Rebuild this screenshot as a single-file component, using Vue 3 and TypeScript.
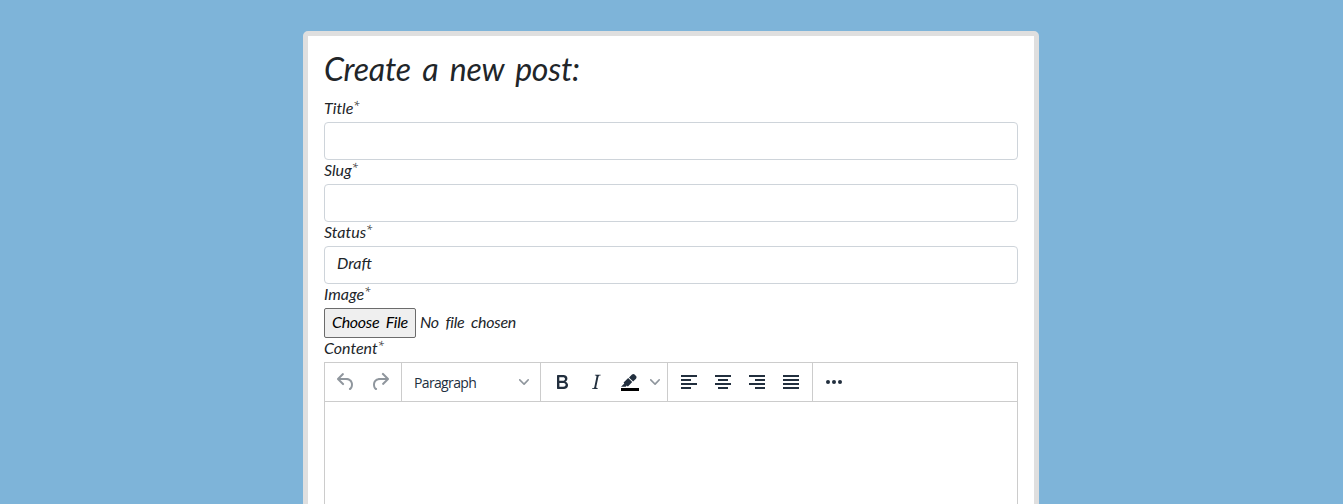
<script setup lang="ts">
import { ref } from 'vue'

const title = ref('')
const slug = ref('')

const alignments: { name: string; d: string }[] = [
  { name: 'Align left', d: 'M4 5h16v2H4zM4 9h10v2H4zM4 13h16v2H4zM4 17h10v2H4z' },
  { name: 'Align center', d: 'M4 5h16v2H4zM7 9h10v2H7zM4 13h16v2H4zM7 17h10v2H7z' },
  { name: 'Align right', d: 'M4 5h16v2H4zM10 9h10v2H10zM4 13h16v2H4zM10 17h10v2H10z' },
  { name: 'Justify', d: 'M4 5h16v2H4zM4 9h16v2H4zM4 13h16v2H4zM4 17h16v2H4z' },
]
const chevron =
  'M8.7 2.2c.3-.3.8-.3 1 0 .4.4.4.9 0 1.2L5.7 7.8c-.3.3-.9.3-1.2 0L.2 3.4a.8.8 0 010-1.2c.3-.3.8-.3 1.1 0L5 6l3.7-3.8z'
</script>

<template>
  <main class="page">
    <form class="card" @submit.prevent>
      <h2 class="heading">Create a new post:</h2>

      <label class="label" for="title">Title<sup>*</sup></label>
      <input id="title" v-model="title" class="control" type="text" />

      <label class="label" for="slug">Slug<sup>*</sup></label>
      <input id="slug" v-model="slug" class="control" type="text" />

      <label class="label">Status<sup>*</sup></label>
      <div class="control">Draft</div>

      <label class="label">Image<sup>*</sup></label>
      <div class="file">
        <button type="button" class="file-button">Choose File</button>
        <span class="file-name">No file chosen</span>
      </div>

      <label class="label">Content<sup>*</sup></label>
      <div class="editor">
        <div class="toolbar">
          <div class="group">
            <button type="button" class="tool" disabled aria-label="Undo">
              <svg width="24" height="24"><path d="M6.4 8H12c3.7 0 6.2 2 6.8 5.1.6 2.7-.4 5.6-2.3 6.8a1 1 0 01-1-1.8c1.1-.6 1.8-2.7 1.4-4.6-.5-2.1-2.1-3.5-4.9-3.5H6.4l3.3 3.3a1 1 0 11-1.4 1.4l-5-5a1 1 0 010-1.4l5-5a1 1 0 011.4 1.4L6.4 8z" /></svg>
            </button>
            <button type="button" class="tool" disabled aria-label="Redo">
              <svg width="24" height="24"><path d="M17.6 10H12c-2.8 0-4.4 1.4-4.9 3.5-.4 2 .3 4 1.4 4.6a1 1 0 11-1 1.8c-2-1.2-2.9-4.1-2.3-6.8.6-3 3-5.1 6.8-5.1h5.6l-3.3-3.3a1 1 0 111.4-1.4l5 5a1 1 0 010 1.4l-5 5a1 1 0 01-1.4-1.4l3.3-3.3z" /></svg>
            </button>
          </div>
          <div class="group">
            <button type="button" class="select">
              <span>Paragraph</span>
              <svg class="chevron" width="10" height="10"><path :d="chevron" /></svg>
            </button>
          </div>
          <div class="group">
            <button type="button" class="tool" aria-label="Bold">
              <svg width="24" height="24"><path fill-rule="evenodd" d="M7.8 19c-.3 0-.5 0-.6-.2l-.2-.5V5.7c0-.2 0-.4.2-.5l.6-.2h5c1.5 0 2.7.3 3.5 1 .7.6 1.1 1.4 1.1 2.5a3 3 0 01-.6 1.9c-.4.6-1 1-1.6 1.2.4.1.9.3 1.3.6s.8.7 1 1.2c.4.4.5 1 .5 1.6 0 1.3-.4 2.3-1.3 3-.8.7-2.1 1-3.8 1H7.8zm5-8.3c.6 0 1.2-.1 1.6-.5.4-.3.6-.7.6-1.3 0-1.1-.8-1.7-2.3-1.7H9.3v3.5h3.4zm.5 6c.7 0 1.3-.1 1.7-.4.4-.4.6-.9.6-1.5s-.2-1-.7-1.4c-.4-.3-1-.4-2-.4H9.4v3.8h4z" /></svg>
            </button>
            <button type="button" class="tool" aria-label="Italic">
              <svg width="24" height="24"><path fill-rule="evenodd" d="M16.7 4.7l-.1.9h-.3c-.6 0-1 0-1.4.3-.3.3-.4.6-.5 1.1l-2.1 9.8v.6c0 .5.4.8 1.4.8h.2l-.2.8H8l.2-.8h.2c1.1 0 1.8-.5 2-1.5l2-9.8.1-.5c0-.6-.4-.8-1.4-.8h-.3l.2-.9h5.8z" /></svg>
            </button>
            <button type="button" class="tool" aria-label="Background color">
              <svg width="24" height="24">
                <path class="ink" d="M3 18h18v3H3z" />
                <path fill-rule="evenodd" d="M7.7 16.7H3l3.3-3.3-.7-.8L10.2 8l4 4.1-4 4.2c-.2.2-.6.2-.8 0l-.6-.7-1.1 1.1zm5-7.5L11 7.4l3-2.9a2 2 0 012.6 0L18 6c.7.7.7 2 0 2.7l-2.9 2.9-1.8-1.8-.5-.6" />
              </svg>
            </button>
            <button type="button" class="split" aria-label="Background color menu">
              <svg class="chevron" width="10" height="10"><path :d="chevron" /></svg>
            </button>
          </div>
          <div class="group">
            <button v-for="a in alignments" :key="a.name" type="button" class="tool" :aria-label="a.name">
              <svg width="24" height="24"><path :d="a.d" /></svg>
            </button>
          </div>
          <div class="group">
            <button type="button" class="tool" aria-label="More">
              <svg width="24" height="24"><circle cx="6" cy="12" r="2" /><circle cx="12" cy="12" r="2" /><circle cx="18" cy="12" r="2" /></svg>
            </button>
          </div>
        </div>
        <div class="body"></div>
      </div>
    </form>
  </main>
</template>

<style>
body {
  margin: 0;
  background: #7eb4d9;
}
</style>

<style scoped>
* {
  box-sizing: border-box;
}
.page {
  height: 504px;
  padding-top: 31px;
  overflow: hidden;
  background: #7eb4d9;
  color: #212529;
  font: italic 400 16px/24px Lato, sans-serif;
}
.card {
  width: 736px;
  height: 620px;
  margin-left: 303px;
  padding: 16px;
  border: 5px solid #dfdfdf;
  border-radius: 5px;
  background: #fff;
}
.heading {
  height: 38px;
  margin: 0 0 8px;
  font-size: 32px;
  font-weight: 400;
  line-height: 34px;
  white-space: nowrap;
  letter-spacing: -0.2px;
  word-spacing: 4px;
}
.label {
  display: flex;
  height: 24px;
  line-height: 20px;
}
.label sup {
  font: italic 400 11px/14px "Open Sans", sans-serif;
  color: #444;
}
.control {
  display: block;
  width: 100%;
  height: 38px;
  padding: 5px 12px;
  border: 1px solid #ced4da;
  border-radius: 4px;
  background: #fff;
  outline: none;
}
div.control {
  padding-top: 4px;
}
.file {
  display: flex;
  align-items: center;
  gap: 4px;
  height: 30px;
  white-space: nowrap;
}
.file-name {
  height: 26px;
  line-height: 23px;
  word-spacing: 3px;
  letter-spacing: -0.25px;
}
.file-button {
  width: 92px;
  height: 30px;
  padding: 0 0 2px 7px;
  border: 1px solid #6b6b6b;
  border-radius: 2px;
  background: #efefef;
  color: #000;
  font: inherit;
  letter-spacing: -0.3px;
  word-spacing: 3px;
  text-align: left;
  white-space: nowrap;
}
.editor {
  height: 240px;
  border: 1px solid #ccc;
}
.toolbar {
  display: flex;
  height: 39px;
  border-bottom: 1px solid #ccc;
}
.group {
  display: flex;
  align-items: center;
  padding: 0 4px;
  border-right: 1px solid #ccc;
}
.group:last-child {
  border-right: 0;
}
.tool,
.select,
.split {
  display: flex;
  align-items: center;
  justify-content: center;
  width: 34px;
  height: 34px;
  padding: 0;
  border: 0;
  background: none;
  color: #222f3e;
}
.tool:disabled svg {
  opacity: 0.5;
}
.select {
  justify-content: space-between;
  width: 130px;
  padding: 2px 7px 0 8px;
  font: 400 14px/20px "Open Sans", sans-serif;
  letter-spacing: -0.65px;
}
.select .chevron {
  margin-bottom: 2px;
}
.split {
  width: 16px;
}
svg {
  display: block;
  fill: #222f3e;
}
.chevron {
  opacity: 0.5;
}
.ink {
  fill: #000;
}
</style>
